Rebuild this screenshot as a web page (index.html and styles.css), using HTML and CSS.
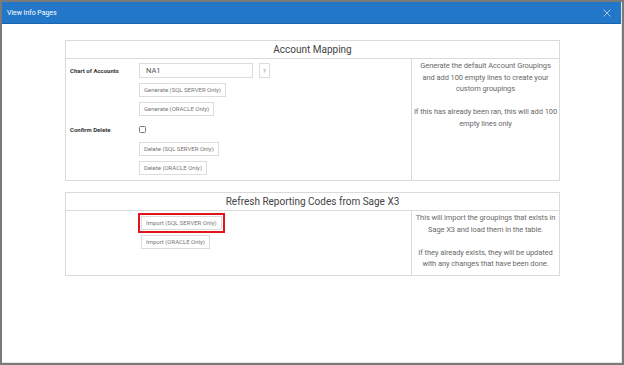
FILE: index.html
```html
<!DOCTYPE html>
<html>
<head>
<meta charset="utf-8">
<link rel="stylesheet" href="styles.css">
</head>
<body>
<div class="modal">
  <div class="modal-header">
    <span class="modal-title">View Info Pages</span>
    <svg class="close" width="8" height="8" viewBox="0 0 8 8"><path d="M0.5 0.5 L7.5 7.5 M7.5 0.5 L0.5 7.5" stroke="#a7c6e8" stroke-width="1" fill="none"/></svg>
  </div>
  <div class="modal-body">
    <section class="panel">
      <div class="panel-title">Account Mapping</div>
      <div class="panel-row">
        <div class="panel-main">
          <div class="form-grid">
            <div class="label">Chart of Accounts</div>
            <div class="control input-group">
              <div class="input">NA1</div>
              <div class="help-btn">?</div>
            </div>
            <div></div>
            <div class="control"><span class="btn">Generate (SQL SERVER Only)</span></div>
            <div></div>
            <div class="control"><span class="btn">Generate (ORACLE Only)</span></div>
            <div class="label">Confirm Delete</div>
            <div class="control check-row"><span class="checkbox"></span></div>
            <div></div>
            <div class="control"><span class="btn">Delete (SQL SERVER Only)</span></div>
            <div></div>
            <div class="control"><span class="btn">Delete (ORACLE Only)</span></div>
          </div>
        </div>
        <div class="panel-info">
          <p>Generate the default Account Groupings<br>and add 100 empty lines to create your<br>custom groupings</p>
          <p>If this has already been ran, this will add 100 empty lines only</p>
        </div>
      </div>
    </section>
    <section class="panel">
      <div class="panel-title">Refresh Reporting Codes from Sage X3</div>
      <div class="panel-row">
        <div class="panel-main import-main">
          <span class="btn highlighted">Import (SQL SERVER Only)</span>
          <span class="btn">Import (ORACLE Only)</span>
        </div>
        <div class="panel-info info-import">
          <p>This will import the groupings that exists in Sage X3 and load them in the table.</p>
          <p>If they already exists, they will be updated with any changes that have been done.</p>
        </div>
      </div>
    </section>
  </div>
</div>
</body>
</html>
```
FILE: styles.css
```css
* { box-sizing: border-box; }
html, body { margin: 0; padding: 0; }
body {
  width: 624px;
  height: 365px;
  background: #7a7a7a;
  padding: 2px;
  font-family: Roboto, "Liberation Sans", sans-serif;
}
.modal {
  width: 620px;
  height: 361px;
  background: #fff;
  border-right: 1px solid #e6e6e6;
  border-bottom: 1px solid #e6e6e6;
  display: flex;
  flex-direction: column;
}
.modal-header {
  height: 22px;
  background: #2277c9;
  border-bottom: 1px solid #1a63ad;
  display: flex;
  align-items: center;
  justify-content: space-between;
  padding: 0 10px 0 5px;
  flex: 0 0 22px;
}
.modal-title {
  color: #fff;
  font-size: 7px;
  letter-spacing: -0.05px;
}
.close { display: block; }
.modal-body {
  padding: 16px 0 0 63px;
  display: flex;
  flex-direction: column;
  gap: 11px;
}
.panel {
  width: 495px;
  border: 1px solid #dadada;
}
.panel-title {
  height: 18px;
  border-bottom: 1px solid #dadada;
  text-align: center;
  font-size: 10px;
  line-height: 17px;
  color: #444;
}
.panel-row {
  display: flex;
}
.panel-main {
  flex: 0 0 345px;
  padding: 4px 4px 5px 4px;
}
.panel-info {
  flex: 1;
  border-left: 1px solid #dadada;
  padding: 1px 0 5px;
  text-align: center;
  font-size: 7.5px;
  letter-spacing: -0.08px;
  line-height: 11.5px;
  color: #6a6a6a;
}
.panel-info p { margin: 0 0 11.5px; }
.panel-info p:last-child { margin-bottom: 0; }
.form-grid {
  display: grid;
  grid-template-columns: 69px auto;
  row-gap: 5px;
  align-items: center;
}
.label {
  font-size: 6px;
  font-weight: 700;
  color: #333;
}
.control { display: flex; align-items: center; }
.input-group { gap: 6px; }
.input {
  width: 114px;
  height: 15px;
  border: 1px solid #dcdcdc;
  padding-left: 6px;
  font-size: 7.5px;
  line-height: 13px;
  color: #555;
}
.help-btn {
  width: 11px;
  height: 15px;
  border: 1px solid #dcdcdc;
  font-size: 6px;
  line-height: 13px;
  text-align: center;
  color: #888;
}
.check-row { height: 16px; }
.checkbox {
  width: 7px;
  height: 7px;
  border: 1px solid #777;
  border-radius: 1.5px;
  display: block;
}
.btn {
  display: inline-block;
  height: 14px;
  padding: 0 4px;
  border: 1px solid #dcdcdc;
  font-size: 6px;
  line-height: 12px;
  color: #777;
  white-space: nowrap;
}
.import-main {
  padding: 4px 4px 5px 75px;
  display: flex;
  flex-direction: column;
  align-items: flex-start;
  gap: 5px;
}
.import-main .btn:first-child { margin-top: 1px; }
.btn.highlighted {
  outline: 2px solid #e0141b;
  outline-offset: 1px;
}
```
